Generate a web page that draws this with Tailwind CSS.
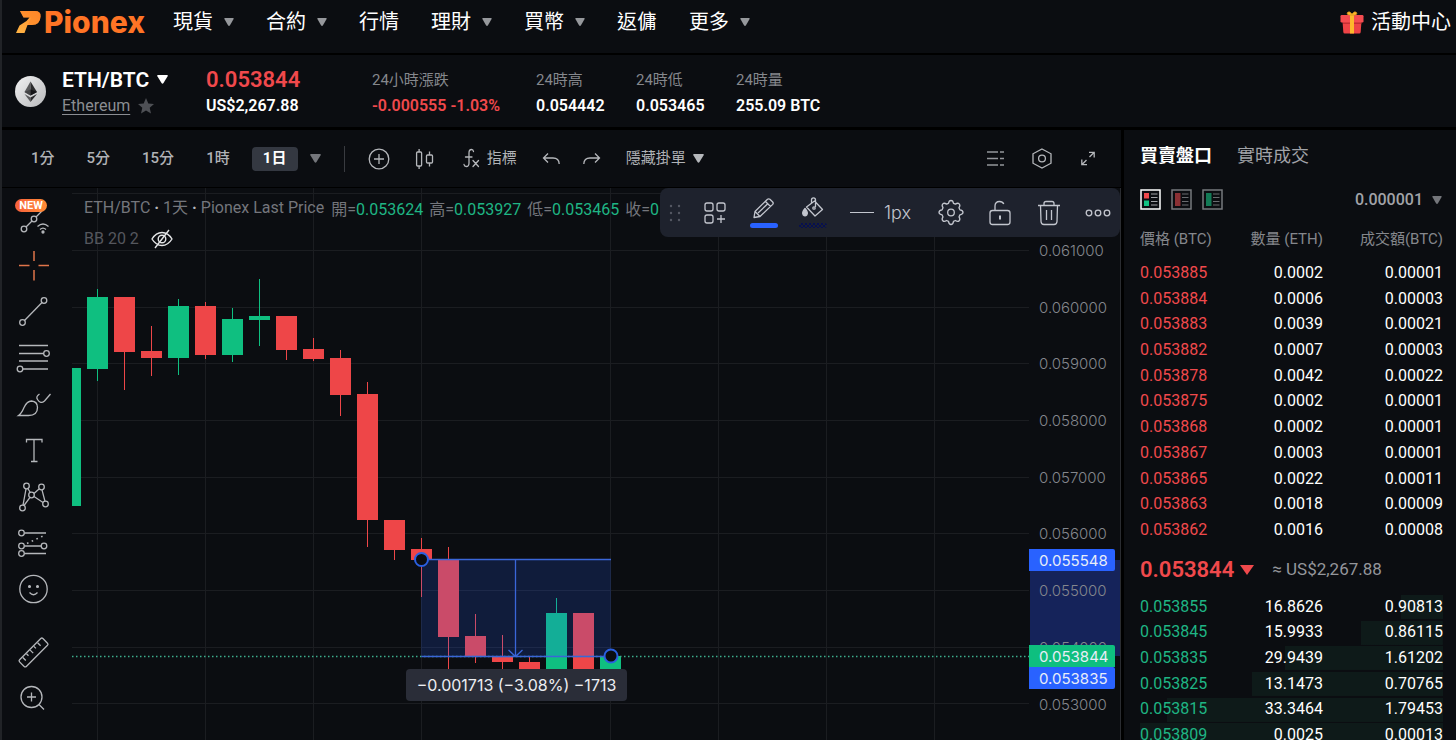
<!DOCTYPE html>
<html lang="zh-Hant">
<head>
<meta charset="utf-8">
<meta name="viewport" content="width=device-width, initial-scale=1">
<title>ETH/BTC | Pionex</title>
<script src="https://cdn.jsdelivr.net/npm/@tailwindcss/browser@4"></script>
</head>
<body class="flex h-screen flex-col overflow-hidden border-l-2 border-[#212327] bg-[#0b0d11] font-['Roboto','Noto_Sans_CJK_TC',sans-serif] text-white">

<!-- Top navigation -->
<header class="flex h-[55px] shrink-0 items-center justify-between border-b-2 border-black pb-[9px] pl-[14px] pr-[5px]">
  <div class="flex items-center gap-7">
    <a href="#" class="flex items-center gap-[3px]" aria-label="Pionex">
      <svg class="h-[22px] w-[25px]" viewBox="0 0 25 22">
        <defs><linearGradient id="mark" x1="1" y1="0" x2="0" y2="1"><stop offset="0" stop-color="#ff8a2a"/><stop offset="1" stop-color="#ffb545"/></linearGradient></defs>
        <path d="M4 0h15q6 0 5.600 5.500Q24 14 16 14h-4.500L8.500 22H0l3.500-7.500 7-4.500 3-3.500H7.500z" fill="url(#mark)"/>
        <path d="M4 0h15q6 0 5.600 5.500Q24 14 16 14h-4.500l4-7.500H7.500z" fill="#ff8126" opacity=".5"/>
      </svg>
      <span class="font-['Inter'] text-[30px] leading-8 font-extrabold text-[#ff7425]">Pionex</span>
    </a>
    <nav class="flex items-center gap-8 text-xl leading-7">
      <a href="#" class="flex items-center gap-[11px]">現貨<svg class="h-2 w-[10px] fill-[#96989c]" viewBox="0 0 10 8"><path d="M1 0h8q1 0 .6 1L6 7.300q-1 1.200-2 0L.4 1Q0 0 1 0z"/></svg></a>
      <a href="#" class="flex items-center gap-[11px]">合約<svg class="h-2 w-[10px] fill-[#96989c]" viewBox="0 0 10 8"><path d="M1 0h8q1 0 .6 1L6 7.300q-1 1.200-2 0L.4 1Q0 0 1 0z"/></svg></a>
      <a href="#">行情</a>
      <a href="#" class="flex items-center gap-[11px]">理財<svg class="h-2 w-[10px] fill-[#96989c]" viewBox="0 0 10 8"><path d="M1 0h8q1 0 .6 1L6 7.300q-1 1.200-2 0L.4 1Q0 0 1 0z"/></svg></a>
      <a href="#" class="flex items-center gap-[11px]">買幣<svg class="h-2 w-[10px] fill-[#96989c]" viewBox="0 0 10 8"><path d="M1 0h8q1 0 .6 1L6 7.300q-1 1.200-2 0L.4 1Q0 0 1 0z"/></svg></a>
      <a href="#">返傭</a>
      <a href="#" class="flex items-center gap-[11px]">更多<svg class="h-2 w-[10px] fill-[#96989c]" viewBox="0 0 10 8"><path d="M1 0h8q1 0 .6 1L6 7.300q-1 1.200-2 0L.4 1Q0 0 1 0z"/></svg></a>
    </nav>
  </div>
  <a href="#" class="flex items-center gap-[7px] text-xl leading-7">
    <svg class="h-6 w-6" viewBox="0 0 24 24">
      <path d="M2.500 11h19l-.8 11q-.1 1.500-1.500 1.500H4.800q-1.400 0-1.500-1.500z" fill="#ee4346"/>
      <rect x=".5" y="5" width="23" height="7.500" rx="1.200" fill="#f54c50"/>
      <path d="M3 12.500h18.300v1.500H3z" fill="#c53034"/>
      <path d="M10 5h4v18.500h-4z" fill="#fdb82c"/>
      <path d="M12 5Q6 5.500 7.500 2.500 9 .5 12 4q3-3.500 4.500-1.500Q18 5.500 12 5z" fill="#fdb82c" stroke="#d9941b" stroke-width=".8"/>
    </svg>活動中心
  </a>
</header>

<!-- Pair summary -->
<section class="flex h-[75px] shrink-0 items-center border-b-3 border-black pt-px pl-[13px]">
  <svg class="mr-4 h-[31px] w-[31px] shrink-0" viewBox="0 0 31 31">
    <defs><linearGradient id="coin" x1="0" y1="0" x2="1" y2="1"><stop offset="0" stop-color="#f1f1f2"/><stop offset="1" stop-color="#b9babc"/></linearGradient></defs>
    <circle cx="15.500" cy="15.500" r="15.500" fill="url(#coin)"/>
    <path d="M15.500 5.500 9.500 16l6 3.500z" fill="#5a5a5c"/><path d="M15.500 5.500 22 16l-6.500 3.500z" fill="#2b2b2d"/>
    <path d="m9.500 16 6-2.600V19.500z" fill="#444446"/><path d="m22 16-6.500-2.600V19.500z" fill="#161618"/>
    <path d="m9.500 18 6 3.600V26z" fill="#5a5a5c"/><path d="m22 18-6.500 3.600V26z" fill="#2b2b2d"/>
  </svg>
  <div class="w-36">
    <button class="flex items-center gap-2 text-[21px] leading-7 font-semibold">ETH/BTC<svg class="h-[9px] w-[11px] fill-white" viewBox="0 0 11 9"><path d="M1 0h9q1.300 0 .6 1.200L6.500 8q-1 1.400-2 0L.4 1.200Q-.3 0 1 0z"/></svg></button>
    <div class="flex h-6 items-center gap-2"><a href="#" class="text-base leading-6 text-[#8b8d92] underline underline-offset-3">Ethereum</a>
      <svg class="h-4 w-4 fill-[#4e5055]" viewBox="0 0 16 16"><path d="m8 0 2.300 5.400 5.700.5-4.300 3.900L13 15.500l-5-3-5 3 1.300-5.700L0 5.900l5.700-.5z"/></svg></div>
  </div>
  <div class="w-[166px]">
    <div class="text-[22px] leading-7 font-semibold text-[#f0494c]">0.053844</div>
    <div class="text-base leading-6 font-semibold">US$2,267.88</div>
  </div>
  <dl class="grid grid-cols-[164px_100px_100px_auto] leading-6">
    <div><dt class="h-7 text-[15px] leading-7 text-[#85878c]">24小時漲跌</dt><dd class="font-semibold text-[#f0494c]">-0.000555 -1.03%</dd></div>
    <div><dt class="h-7 text-[15px] leading-7 text-[#85878c]">24時高</dt><dd class="font-semibold">0.054442</dd></div>
    <div><dt class="h-7 text-[15px] leading-7 text-[#85878c]">24時低</dt><dd class="font-semibold">0.053465</dd></div>
    <div><dt class="h-7 text-[15px] leading-7 text-[#85878c]">24時量</dt><dd class="font-semibold">255.09 BTC</dd></div>
  </dl>
</section>

<main class="flex min-h-0 flex-1">
  <section class="flex min-w-0 flex-1 flex-col">
    <!-- Chart toolbar -->
    <div class="flex h-[58px] shrink-0 items-center justify-between border-b border-black pl-[29px] pr-[21px] text-[15px] font-medium text-[#b0b2b6]">
      <div class="flex items-center">
        <div class="flex items-center gap-8">
          <button>1分</button><button>5分</button><button>15分</button><button>1時</button>
        </div>
        <button class="ml-[22px] h-6 w-[46px] rounded-sm bg-[#343841] font-bold text-white">1日</button>
        <button aria-label="更多週期" class="ml-3"><svg class="h-[9px] w-[11px] fill-[#74767b]" viewBox="0 0 11 9"><path d="M1 0h9q1.300 0 .6 1.200L6.500 8q-1 1.400-2 0L.4 1.200Q-.3 0 1 0z"/></svg></button>
        <div class="ml-[23px] h-[26px] w-px bg-[#393b40]"></div>
        <button aria-label="比較" class="ml-[22px]"><svg class="h-6 w-6 fill-none stroke-[#b5b7bb]" stroke-width="1.300" viewBox="0 0 24 24"><circle cx="12" cy="12" r="9.800"/><path d="M12 7v10M7 12h10"/></svg></button>
        <button aria-label="K線" class="ml-[22px]"><svg class="h-6 w-6 fill-none stroke-[#b5b7bb]" stroke-width="1.300" viewBox="0 0 24 24"><rect x="3.600" y="5" width="5" height="14" rx="1"/><path d="M6.100 2v3M6.100 19v3M16.500 4.500V8M16.500 16v3.500"/><rect x="13.500" y="8" width="6" height="8" rx="1"/></svg></button>
        <button class="ml-[22px] flex items-center gap-1 font-normal"><svg class="h-6 w-6 fill-none stroke-[#b5b7bb]" stroke-width="1.300" stroke-linecap="round" viewBox="0 0 24 24"><path d="M14.500 4.500q-.3-2-2-2-2.500 0-2.500 3.500v10q0 3.500-2.700 3.500-2 0-2.300-2M6.500 10h6.500M14 13.500l5.500 6M19.500 13.500l-5.500 6"/></svg>指標</button>
        <button aria-label="復原" class="ml-[22px]"><svg class="h-6 w-6 fill-none stroke-[#b5b7bb]" stroke-width="1.300" viewBox="0 0 24 24"><path d="M9 6.500 4.500 11 9 15.500M4.500 11H14q6 0 6.200 6"/></svg></button>
        <button aria-label="重做" class="ml-[17px]"><svg class="h-6 w-6 fill-none stroke-[#b5b7bb]" stroke-width="1.300" viewBox="0 0 24 24"><path d="m15 6.500 4.500 4.500L15 15.500M19.500 11H10q-6 0-6.200 6"/></svg></button>
        <button class="ml-[22px] flex items-center gap-[7px] font-normal">隱藏掛單<svg class="h-[9px] w-[11px] fill-[#b5b7bb]" viewBox="0 0 11 9"><path d="M1 0h9q1.300 0 .6 1.200L6.500 8q-1 1.400-2 0L.4 1.200Q-.3 0 1 0z"/></svg></button>
      </div>
      <div class="flex items-center gap-[22px]">
        <button aria-label="列表"><svg class="h-6 w-6 fill-none stroke-[#94969b]" stroke-width="1.300" viewBox="0 0 24 24"><path d="M3 5h11M16 5h4M3 11.500h11M16 11.500h4M3 18h11M16 18h4"/></svg></button>
        <button aria-label="設定"><svg class="h-6 w-6 fill-none stroke-[#b5b7bb]" stroke-width="1.300" viewBox="0 0 24 24"><path d="m12 2 9 4.800v9.400L12 21l-9-4.800V6.800z"/><circle cx="12" cy="11.500" r="3.400"/></svg></button>
        <button aria-label="全螢幕"><svg class="h-6 w-6 fill-none stroke-[#b5b7bb]" stroke-width="1.300" viewBox="0 0 24 24"><path d="m13.500 10 4.700-4.700M13 5.300h5.200v5.200M10.500 13l-4.700 4.700M5.800 12.500v5.200H11"/></svg></button>
      </div>
    </div>

    <div class="flex min-h-0 flex-1">
      <!-- Drawing tools -->
      <aside class="flex w-[70px] shrink-0 flex-col overflow-hidden pr-[8px] pt-[9px]">
        <button aria-label="訊號" class="relative flex h-[46px] shrink-0 items-center justify-center">
          <svg class="h-10 w-10 fill-none stroke-[#b5b7bb]" stroke-width="1.300" viewBox="0 0 40 40"><circle cx="11" cy="29" r="2.800"/><circle cx="21" cy="19" r="2.800"/><path d="m13 27 6-6M23 17l6-6M24.500 26.500q5.500-5 11 0M27 29.500q3-2.800 6 0"/><circle cx="30" cy="32" r="1" class="fill-[#b5b7bb]"/></svg>
          <span class="absolute top-[2px] left-[13px] h-[13px] w-8 rounded-full bg-linear-to-r from-[#f8603c] to-[#ff8b35] text-center text-[11px] leading-[13px] font-bold text-white">NEW</span>
        </button>
        <button aria-label="十字線" class="flex h-[46px] shrink-0 items-center justify-center"><svg class="h-10 w-10 fill-none stroke-[#e0744a]" stroke-width="1.500" viewBox="0 0 40 40"><path d="M21 5v10M21 24v10.500M6 19.500h10.500M25.500 19.500h10.500"/></svg></button>
        <button aria-label="趨勢線" class="flex h-[46px] shrink-0 items-center justify-center"><svg class="h-10 w-10 fill-none stroke-[#b5b7bb]" stroke-width="1.300" viewBox="0 0 40 40"><circle cx="9.500" cy="30.500" r="2.800"/><circle cx="31" cy="8.500" r="2.800"/><path d="M11.500 28.500 29 10.500"/></svg></button>
        <button aria-label="斐波那契" class="flex h-[46px] shrink-0 items-center justify-center"><svg class="h-10 w-10 fill-none stroke-[#b5b7bb]" stroke-width="1.300" viewBox="0 0 40 40"><path d="M6 7.500h29M6 15.500h25M6 23h29M10 31h25"/><circle cx="33.500" cy="15.500" r="2.800"/><circle cx="7" cy="31" r="2.800"/></svg></button>
        <button aria-label="筆刷" class="flex h-[46px] shrink-0 items-center justify-center"><svg class="h-10 w-10 fill-none stroke-[#b5b7bb]" stroke-width="1.300" viewBox="0 0 40 40"><path d="M5.500 31.500q3-2 5.500-8 3-6.500 7.500-6.500 6 .5 6 6.500 0 8-9 8zM26.500 10q-4 2.500-2 5.500 3 5 7 1.500l6-7"/></svg></button>
        <button aria-label="文字" class="flex h-[46px] shrink-0 items-center justify-center"><svg class="h-10 w-10 fill-none stroke-[#b5b7bb]" stroke-width="1.300" viewBox="0 0 40 40"><path d="M13.500 12.500V9.500h15.500v3M21 9.500v22M18 31.500h6.500"/></svg></button>
        <button aria-label="形態" class="flex h-[46px] shrink-0 items-center justify-center"><svg class="h-10 w-10 fill-none stroke-[#b5b7bb]" stroke-width="1.300" viewBox="0 0 40 40"><circle cx="13.500" cy="10" r="2.800"/><circle cx="28.500" cy="11" r="2.800"/><circle cx="18.500" cy="19" r="2.800"/><circle cx="9.500" cy="32" r="2.800"/><circle cx="32.500" cy="28" r="2.800"/><path d="M13 13 10 29.200M14.800 12.500l2.500 4M21 17.500l5-4.500M29 13.800l3 11.500M21 20.500l9 6M17 21.300l-6 8.200"/></svg></button>
        <button aria-label="預測" class="flex h-[46px] shrink-0 items-center justify-center"><svg class="h-10 w-10 fill-none stroke-[#b5b7bb]" stroke-width="1.300" viewBox="0 0 40 40"><circle cx="8.500" cy="11" r="2.800"/><circle cx="8.500" cy="24" r="2.800"/><circle cx="31" cy="24" r="2.800"/><circle cx="8.500" cy="31.500" r="2.800"/><path d="M11.500 11H33M11.500 24h17M11.500 31.500H33"/><path d="m14 21.500 17-8" stroke-width="1.600" stroke-dasharray="1.600 3.600"/></svg></button>
        <button aria-label="表情" class="flex h-[46px] shrink-0 items-center justify-center"><svg class="h-10 w-10 fill-none stroke-[#b5b7bb]" stroke-width="1.300" viewBox="0 0 40 40"><circle cx="20.500" cy="21" r="13.700"/><path d="M16.500 24.500q4 4.500 8 0"/><circle cx="16.500" cy="18.500" r=".9" class="fill-[#b5b7bb]"/><circle cx="24.500" cy="18.500" r=".9" class="fill-[#b5b7bb]"/></svg></button>
        <button aria-label="測量" class="mt-[18px] flex h-[46px] shrink-0 items-center justify-center"><svg class="h-10 w-10 fill-none stroke-[#b5b7bb]" stroke-width="1.300" viewBox="0 0 40 40"><rect x="4" y="15.800" width="33" height="9.500" rx="1.500" transform="rotate(-45 20.500 20.500)"/><path d="m9.800 25.500 3 3M13.500 21.800l2 2M17.200 18.100l3 3M20.900 14.400l2 2M24.600 10.700l3 3"/></svg></button>
        <button aria-label="放大" class="flex h-[46px] shrink-0 items-center justify-center"><svg class="h-10 w-10 fill-none stroke-[#b5b7bb]" stroke-width="1.300" viewBox="0 0 40 40"><circle cx="18.500" cy="19" r="10.500"/><path d="M18.500 14.500v9M14 19h9M26 26.500l5 5"/></svg></button>
      </aside>

      <!-- Chart canvas; drawing units start at (72,188) -->
      <div class="relative min-w-0 flex-1 overflow-hidden border-r border-[#2a2c31]">
        <svg class="h-full w-full font-['Inter',sans-serif]" viewBox="72 188 1048 552" preserveAspectRatio="xMinYMin slice" role="img" aria-label="ETH/BTC 1天 K線圖">
          <path stroke="#1b1d21" d="M97.500 188V740M205.500 188V740M313.500 188V740M421.500 188V740M610.500 188V740M718.500 188V740M826.500 188V740M934.500 188V740M72 193.500H1029M72 250.500H1029M72 307.500H1029M72 363.500H1029M72 420.500H1029M72 477.500H1029M72 533.500H1029M72 590.500H1029M72 647.500H1029M72 703.500H1029"/>
          <g id="candles" shape-rendering="crispEdges"></g>
          <path d="M72 656.500H1029" stroke="#3dae8d" stroke-width="1.300" stroke-dasharray="1.500 2.500"/>
          <rect x="421" y="559" width="190" height="97" fill="#2962ff" fill-opacity=".18"/>
          <path d="M421.500 559.500H611M421.500 656.500H611M515.500 559.500V656M508.500 650l7 6.500 7-6.500" fill="none" stroke="#3a66d8" stroke-width="1.300"/>
          <g fill="#0b0d11" stroke="#2a5fe0" stroke-width="2"><circle cx="421.500" cy="559.500" r="6.500"/><circle cx="611" cy="656" r="6.500"/></g>
          <rect x="1030" y="560" width="90" height="96" fill="#15235a"/>
          <g font-size="15" font-weight="300" fill="#84878d">
            <text x="1039" y="256">0.061000</text><text x="1039" y="313">0.060000</text><text x="1039" y="369">0.059000</text><text x="1039" y="426">0.058000</text><text x="1039" y="483">0.057000</text><text x="1039" y="539">0.056000</text><text x="1039" y="596">0.055000</text><text x="1039" y="653">0.054000</text><text x="1039" y="710">0.053000</text>
          </g>
          <path d="M1029 549h84q2 0 2 2v18q0 2-2 2h-84zM1029 667h84q2 0 2 2v18q0 2-2 2h-84z" fill="#2962ff"/>
          <path d="M1029 645h84q2 0 2 2v20h-86z" fill="#0ebf7f"/>
          <g font-size="15" fill="#e8edf8" font-weight="400"><text x="1039" y="566">0.055548</text><text x="1039" y="662">0.053844</text><text x="1039" y="684">0.053835</text></g>
          <rect x="406" y="669" width="221" height="32" rx="4" fill="#2a2d38"/>
          <text x="516.500" y="691" text-anchor="middle" font-size="16" font-weight="400" fill="#eceef2">−0.001713 (−3.08%) −1713</text>
        </svg>
        <div class="absolute top-2 left-3 text-base leading-6 text-[#74767c]">
          <div class="flex gap-[7px] whitespace-nowrap">
            <span>ETH/BTC <b class="text-[#b5b7bb]">·</b> 1天 <b class="text-[#b5b7bb]">·</b> Pionex Last Price</span>
            <span class="flex gap-[6px] pt-[2px]"><span>開=<span class="text-[#1fb584]">0.053624</span></span><span>高=<span class="text-[#1fb584]">0.053927</span></span><span>低=<span class="text-[#1fb584]">0.053465</span></span><span>收=<span class="text-[#1fb584]">0.053844</span></span></span>
          </div>
          <div class="mt-[5px] flex items-center gap-3 text-[#55575e]">BB 20 2
            <button aria-label="顯示指標"><svg class="h-[22px] w-[22px] fill-none stroke-[#e4e5e7]" stroke-width="1.400" viewBox="0 0 22 22"><path d="M1 11q4-6.500 10-6.500T21 11q-4 6.500-10 6.500T1 11zM18 2 4 20"/><circle cx="11" cy="11" r="3.800"/></svg></button>
          </div>
        </div>

        <!-- Floating line-style toolbar -->
        <div class="absolute top-0 right-0 flex h-[49px] w-[460px] items-center rounded-lg bg-[#1e222d] pl-[9px]">
          <svg class="h-5 w-3 fill-[#555963]" viewBox="0 0 12 20"><circle cx="2" cy="3" r="1.200"/><circle cx="10" cy="3" r="1.200"/><circle cx="2" cy="10" r="1.200"/><circle cx="10" cy="10" r="1.200"/><circle cx="2" cy="17" r="1.200"/><circle cx="10" cy="17" r="1.200"/></svg>
          <button aria-label="範本" class="ml-[20px]"><svg class="h-7 w-7 fill-none stroke-[#c3c6ce]" stroke-width="1.300" viewBox="0 0 28 28"><rect x="4" y="4" width="8" height="8" rx="2"/><rect x="16" y="4" width="8" height="8" rx="2"/><rect x="4" y="16" width="8" height="8" rx="2"/><path d="M20 16v8M16 20h8"/></svg></button>
          <button aria-label="線條顏色" class="ml-[21px] flex flex-col items-center gap-[2px]"><svg class="h-6 w-7 fill-none stroke-[#c3c6ce]" stroke-width="1.300" stroke-linejoin="round" viewBox="0 0 28 24"><path d="M4 20.500 5 14.500 17.500 2.300q1.200-1 2.400 0l2.800 2.700q1 1.200 0 2.400L10 19.500zM5 14.500l5 5M15.500 4.500l5 5M8 16 18 6.500"/></svg><span class="h-[5px] w-7 rounded-full bg-[#2962ff]"></span></button>
          <button aria-label="背景顏色" class="ml-[21px] flex flex-col items-center gap-[2px]"><svg class="h-6 w-7 fill-none stroke-[#c3c6ce]" stroke-width="1.300" stroke-linejoin="round" viewBox="0 0 28 24"><path d="m7.500 10 8-6 8 8.500-7.500 6.500zM12.500 6.200V3q0-2.200 2-2.200t2 2.200v7"/><circle cx="15" cy="11" r="1.200"/><path d="M6 11.500q3.500 4 1.800 6.500-1.800 1.500-3.500 0-1.800-2.500 1.700-6.500z" class="fill-[#c3c6ce]"/></svg><span class="h-[5px] w-7 rounded-full bg-[repeating-conic-gradient(#071050_0_25%,#1e222d_0_50%)] bg-[length:4px_4px]"></span></button>
          <button class="ml-[23px] flex items-center gap-[10px] font-['Inter',sans-serif] text-lg font-light text-[#c3c6ce]"><span class="h-px w-6 bg-[#c3c6ce]"></span>1px</button>
          <div class="ml-auto flex items-center gap-[21px] pr-2">
          <button aria-label="設定"><svg class="h-7 w-7 fill-none stroke-[#c3c6ce]" stroke-width="1.300" stroke-linejoin="round" viewBox="0 0 28 28"><path d="M11.500 4.300q.5-2.800 2.500-2.800t2.500 2.800l1.900.8q2.400-1.600 3.800-.2 1.400 1.400-.2 3.800l.9 2.100q3.100.4 3.100 2.500t-3.100 2.500l-.9 2.100q1.600 2.400.2 3.800t-3.800-.2l-1.900.8Q16 25.500 14 25.500t-2.500-3.200l-1.900-.8q-2.400 1.600-3.800.2t.2-3.800L5.100 15.800Q2 15.400 2 13.300t3.100-2.500L6 8.700Q4.400 6.300 5.800 4.900t3.800.2z"/><circle cx="14" cy="13.500" r="3.300"/></svg></button>
          <button aria-label="鎖定"><svg class="h-7 w-7 fill-none stroke-[#c3c6ce]" stroke-width="1.300" viewBox="0 0 28 28"><rect x="4" y="11.500" width="20" height="14" rx="2.500"/><path d="M9 11.500V7q0-4.500 4.500-4.500 3 0 4.300 2.500"/><path d="M14 16.500v4" stroke-width="2"/></svg></button>
          <button aria-label="刪除"><svg class="h-7 w-7 fill-none stroke-[#c3c6ce]" stroke-width="1.300" viewBox="0 0 28 28"><path d="M3 6.500h22M9 6.500V4.500q0-2 2-2h6q2 0 2 2v2M5.500 6.500 6 22.500q.2 3 3 3h10q2.800 0 3-3l.5-16M11.500 11v10M16.500 11v10"/></svg></button>
          <button aria-label="更多"><svg class="h-7 w-7 fill-none stroke-[#c3c6ce]" stroke-width="1.300" viewBox="0 0 28 28"><circle cx="5" cy="14" r="2.800"/><circle cx="14" cy="14" r="2.800"/><circle cx="23" cy="14" r="2.800"/></svg></button>
          </div>
        </div>
      </div>
    </div>
  </section>

  <!-- Order book -->
  <aside class="flex w-[335px] shrink-0 flex-col overflow-hidden border-l-3 border-black pr-[13px] pl-4">
    <div class="flex h-[52px] shrink-0 items-center gap-[25px] text-lg leading-7">
      <button class="font-bold">買賣盤口</button><button class="text-[#a1a3a8]">實時成交</button>
    </div>
    <div class="flex h-[35px] shrink-0 items-center justify-between">
      <div class="flex gap-[10px]">
        <button aria-label="全部"><svg class="h-[21px] w-[21px]" viewBox="0 0 21 21"><path d="M1 1h19v19H1z" fill="#0b0d11" stroke="#fff" stroke-width="1.500"/><path d="M4 4h5v5.500H4z" fill="#f0494c"/><path d="M4 11.500h5V17H4z" fill="#12c282"/><path d="M11 5h6.500M11 8.500h6.500M11 12.500h6.500M11 16h6.500" stroke="#a0a2a6"/></svg></button>
        <button aria-label="賣盤"><svg class="h-[21px] w-[21px]" viewBox="0 0 21 21"><path d="M1 1h19v19H1z" fill="#0b0d11" stroke="#77797d" stroke-width="1.500"/><path d="M4 4h5.500v13H4z" fill="#8a3034"/><path d="M11 5h6.500M11 8.500h6.500M11 12.500h6.500M11 16h6.500" stroke="#6a6c70"/></svg></button>
        <button aria-label="買盤"><svg class="h-[21px] w-[21px]" viewBox="0 0 21 21"><path d="M1 1h19v19H1z" fill="#0b0d11" stroke="#77797d" stroke-width="1.500"/><path d="M4 4h5.500v13H4z" fill="#137a56"/><path d="M11 5h6.500M11 8.500h6.500M11 12.500h6.500M11 16h6.500" stroke="#6a6c70"/></svg></button>
      </div>
      <button class="flex items-center gap-[9px] pr-px text-base font-medium text-[#a1a3a8]">0.000001<svg class="h-2 w-[10px] fill-[#74767b]" viewBox="0 0 10 8"><path d="M1 0h8q1 0 .6 1L6 7.300q-1 1.200-2 0L.4 1Q0 0 1 0z"/></svg></button>
    </div>
    <table class="h-[326px] w-full shrink-0 table-fixed text-base leading-6">
      <thead><tr class="h-[43px] text-[15px] whitespace-nowrap text-[#85878c]"><th class="w-[29%] p-0 text-left font-normal">價格 (BTC)</th><th class="p-0 text-right font-normal">數量 (ETH)</th><th class="w-[120px] p-0 text-right font-normal">成交額(BTC)</th></tr></thead>
      <tbody id="asks"></tbody>
    </table>
    <div class="flex h-[51px] shrink-0 items-center pt-[3px] text-[17px]">
      <span class="text-[22px] leading-7 font-semibold text-[#f0494c]">0.053844</span>
      <svg class="ml-[6px] h-[10px] w-[14px] fill-[#f0494c]" viewBox="0 0 14 10"><path d="M0 0h14L7 10z"/></svg>
      <span class="ml-[18px] text-[#94969b]">≈ US$2,267.88</span>
    </div>
    <table class="h-[154px] w-full shrink-0 table-fixed text-base leading-6">
      <tbody id="bids"></tbody>
    </table>
  </aside>
</main>

<script>
  // Candle: centre x, wick top, body top, body bottom, wick bottom, up?
  const candles = [
    [98,289,297,369,381,1],[125,297,297,352,390,0],[152,326,351,358,376,0],[179,299,306,358,375,1],
    [206,302,306,355,359,0],[233,308,319,355,362,1],[260,279,316,320,346,1],[287,316,316,350,360,0],
    [314,338,349,359,361,0],[341,350,358,395,416,0],[368,382,394,520,547,0],[395,520,520,550,560,0],
    [422,538,549,560,597,0],[449,547,560,637,669,0],[476,614,636,656,663,0],[503,635,656,662,669,0],
    [530,656,662,669,669,0],[557,598,613,669,669,1],[584,613,613,669,669,0],[611,656,656,669,669,1]
  ];
  document.getElementById('candles').innerHTML =
    '<rect x="72" y="368" width="9" height="138" fill="#0fbf80"/>' +
    candles.map(([x, wt, bt, bb, wb, up]) => {
      const c = up ? '#0fbf80' : '#ee4648';
      return `<rect x="${x - 1}" y="${wt}" width="1" height="${wb - wt}" fill="${c}"/><rect x="${x - 11}" y="${bt}" width="21" height="${bb - bt}" fill="${c}"/>`;
    }).join('');

  const asks = [['0.053885','0.0002','0.00001'],['0.053884','0.0006','0.00003'],['0.053883','0.0039','0.00021'],['0.053882','0.0007','0.00003'],['0.053878','0.0042','0.00022'],['0.053875','0.0002','0.00001'],['0.053868','0.0002','0.00001'],['0.053867','0.0003','0.00001'],['0.053865','0.0022','0.00011'],['0.053863','0.0018','0.00009'],['0.053862','0.0016','0.00008']];
  document.getElementById('asks').innerHTML = asks.map(([p, q, t]) =>
    `<tr><td class="p-0 text-[#f0494c]">${p}</td><td class="p-0 text-right">${q}</td><td class="p-0 text-right">${t}</td></tr>`).join('');

  const bids = [['0.053855','16.8626','0.90813',14],['0.053845','15.9933','0.86115',27],['0.053835','29.9439','1.61202',52],['0.053825','13.1473','0.70765',63],['0.053815','33.3464','1.79453',91],['0.053809','0.0025','0.00013',100]];
  document.getElementById('bids').innerHTML = bids.map(([p, q, t, depth]) =>
    `<tr class="bg-[linear-gradient(#0e1a19,#0e1a19)] bg-right bg-no-repeat" style="background-size:${depth}% 92%"><td class="w-[29%] p-0 text-[#1fb584]">${p}</td><td class="p-0 text-right">${q}</td><td class="w-[120px] p-0 text-right">${t}</td></tr>`).join('');
</script>
</body>
</html>
